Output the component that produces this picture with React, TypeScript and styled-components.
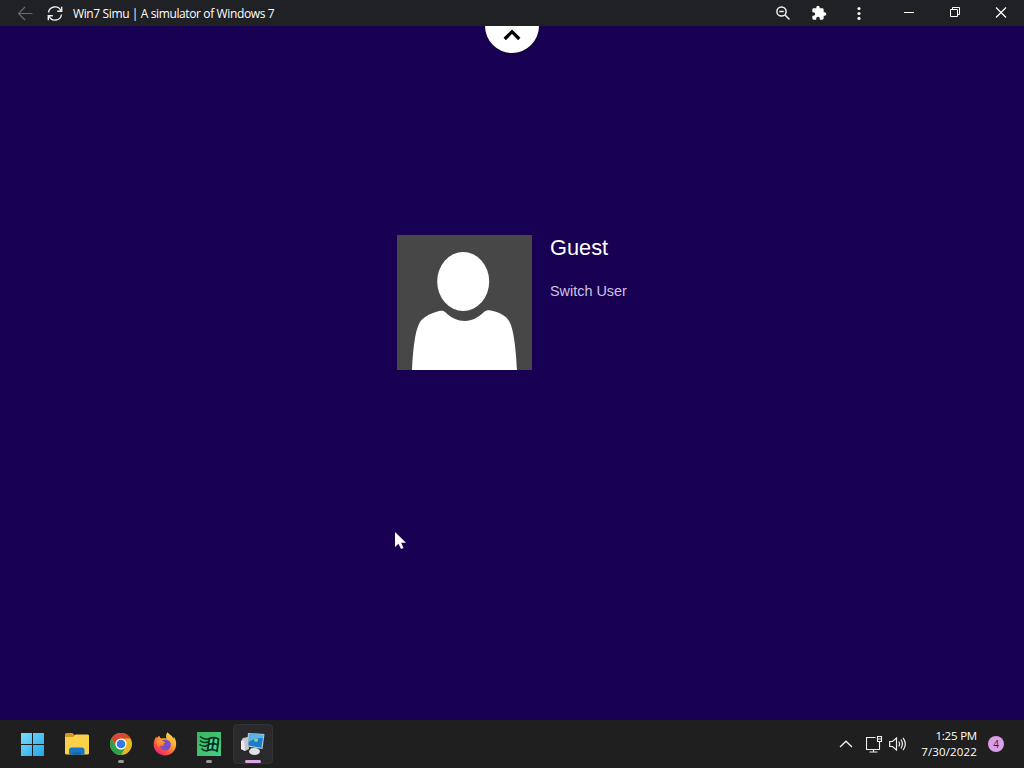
import React from "react"
import styled, { createGlobalStyle } from "styled-components"


const GlobalStyle = createGlobalStyle`
    * {
        box-sizing: border-box;
    }
    body {
        margin: 0;
        overflow: hidden;
        background: #180052;
    }
    svg {
        display: block;
        flex-shrink: 0;
    }
`
const Screen = styled.div`
    position: relative;
    display: flex;
    flex-direction: column;
    width: 1024px;
    height: 768px;
    background: #180052;
    font-family: "Open Sans", "Noto Sans", sans-serif;
    color: #fff;
    cursor: default;
`
const TitleBar = styled.header`
    display: flex;
    align-items: center;
    height: 26px;
    padding-left: 5px;
    background: #202124;
`
const BarButton = styled.div<{ $width: number }>`
    display: flex;
    align-items: center;
    justify-content: center;
    width: ${({ $width }) => $width}px;
    height: 26px;
`
const Title = styled.div`
    flex: 1;
    padding: 2px 0 0 8px;
    font-size: 12px;
    font-weight: 500;
    line-height: 26px;
    letter-spacing: -0.38px;
    white-space: nowrap;
    color: #fff;
`
const WindowButtons = styled.div`
    display: flex;
    margin-left: 5px;
`
const Desktop = styled.main`
    position: relative;
    flex: 1;
    padding: 209px 0 0 397px;
    overflow: hidden;
`
const PullTab = styled.div`
    position: absolute;
    top: -27px;
    left: 485px;
    display: flex;
    justify-content: center;
    width: 54px;
    height: 54px;
    padding-top: 30px;
    border-radius: 50%;
    background: #fff;
    box-shadow: 0 0 3px rgba(0, 0, 0, 0.6);
`
const UserCard = styled.section`
    display: flex;
    gap: 18px;
    font-family: "Liberation Sans", Arial, sans-serif;
`
const UserInfo = styled.div`
    display: flex;
    flex-direction: column;
    gap: 23px;
`
const UserName = styled.div`
    font-size: 21.8px;
    line-height: 25px;
`
const SwitchUser = styled.div`
    font-size: 14.4px;
    line-height: 16px;
    color: #cfc3e6;
`
const Cursor = styled.svg`
    position: absolute;
    left: 394px;
    top: 531px;
`
const Taskbar = styled.footer`
    display: flex;
    align-items: center;
    justify-content: space-between;
    height: 48px;
    padding: 0 20px 0 13px;
    background: #1f1f1f;
`
const Apps = styled.div`
    display: flex;
    gap: 4px;
`
const AppButton = styled.div<{ $active?: boolean }>`
    position: relative;
    display: flex;
    align-items: center;
    justify-content: center;
    width: 40px;
    height: 40px;
    border: 1px solid ${({ $active }) => ($active ? "#333336" : "transparent")};
    border-radius: 4px;
    background: ${({ $active }) => ($active ? "#2a2a2c" : "transparent")};
`
const Indicator = styled.div<{ $active?: boolean }>`
    position: absolute;
    bottom: 0;
    left: 50%;
    width: ${({ $active }) => ($active ? 16 : 6)}px;
    height: 3px;
    border-radius: 2px;
    transform: translateX(-50%);
    background: ${({ $active }) => ($active ? "#d9a5e3" : "#9b9b9b")};
`
const Tray = styled.div`
    display: flex;
    align-items: center;
`
const TrayIcons = styled.div`
    display: flex;
    align-items: center;
    margin-right: 13px;
`
const Clock = styled.div`
    width: 57px;
    margin-right: 11px;
    font-size: 11.5px;
    font-weight: 500;
    line-height: 16px;
    text-align: right;
    white-space: nowrap;
`
const Time = styled.div`
    letter-spacing: -0.2px;
`
const DateText = styled.div`
    letter-spacing: 0.15px;
`
const Badge = styled.div`
    width: 16px;
    height: 16px;
    border-radius: 50%;
    background: #dc9ee6;
    color: #38203d;
    font-size: 10px;
    line-height: 16px;
    text-align: center;
`

const Avatar = () => (
  <svg width="135" height="135" viewBox="0 0 135 135">
    <rect width="135" height="135" fill="#474747" />
    <ellipse cx="66.2" cy="46.5" rx="26" ry="29.5" fill="#fff" />
    <path
      d="M15 135C16 114 18 97 22 89C25 82 33 79 39 77C43 75.500 46 75 48 77C54 83 61 86 68 86C75 86 82 82 87 77C89 75 93 75 96 76C104 78 109 81 112 86C117 94 119 116 120 135Z"
      fill="#fff"
    />
  </svg>
)

const WindowsIcon = () => (
  <svg width="24" height="24" viewBox="0 0 24 24">
    <defs>
      <linearGradient id="win" x1="0" y1="0" x2="1" y2="1">
        <stop offset="0" stopColor="#7bdcfb" />
        <stop offset="1" stopColor="#22a6ea" />
      </linearGradient>
    </defs>
    <path d="M0 1H11V12H0zM12 1H23V12H12zM0 13H11V24H0zM12 13H23V24H12z" fill="url(#win)" />
  </svg>
)

const FolderIcon = () => (
  <svg width="26" height="24" viewBox="0 0 26 24">
    <path d="M1 2.500Q1 1 2.500 1H8.500L11 3.500V8H1z" fill="#d9971b" />
    <path d="M1 5H9L11.500 2.500H24Q25 2.500 25 4V21Q25 22.500 23.500 22.500H2.500Q1 22.500 1 21z" fill="#fbd14b" />
    <path d="M5 22.500V18Q5 15.500 7.500 15.500H18Q20.500 15.500 20.500 18V22.500z" fill="#1976c5" />
    <path d="M8.500 22.500V20.500H17V22.500z" fill="#0f63b0" />
  </svg>
)

const ChromeIcon = () => (
  <svg width="24" height="24" viewBox="0 0 24 24">
    <circle cx="12" cy="12" r="11" fill="#e8b91f" />
    <path d="M2.470 6.500A11 11 0 0 1 21.530 6.500H12A5.500 5.500 0 0 0 7.240 14.750z" fill="#db4437" />
    <path d="M2.470 6.500A11 11 0 0 0 12 23L16.760 14.750A5.500 5.500 0 0 1 7.240 14.750z" fill="#2aa14f" />
    <circle cx="12" cy="12" r="5.600" fill="#fff" />
    <circle cx="12" cy="12" r="4.300" fill="#3b78e0" />
  </svg>
)

const FirefoxIcon = () => (
  <svg width="24" height="24" viewBox="0 0 24 24">
    <defs>
      <linearGradient id="fox" x1="0.850" y1="0.050" x2="0.200" y2="0.950">
        <stop offset="0" stopColor="#ffe14a" />
        <stop offset="0.450" stopColor="#ff9a2b" />
        <stop offset="0.750" stopColor="#ff4b45" />
        <stop offset="1" stopColor="#e32878" />
      </linearGradient>
    </defs>
    <path
      d="M14.500 0.300C16 2.500 19 3.500 20.500 6.500L21 5C23 8 23.500 11 23 14C22 20 17.500 23.400 12 23.400C6 23.400 1 19 0.700 13C0.500 9.500 1.800 6.500 3.300 4.500L3.700 6.300C4.500 5 5.500 4.300 6.600 4C6.600 5.200 7 6 8.500 6.600C10 6 12 6 13.500 6.500C12.700 4.500 13 2 14.500 0.300z"
      fill="url(#fox)"
    />
    <path d="M8 10C9.500 6.500 15 6.500 17.200 10C19 14 16.500 18.500 12.500 18.500C9.500 18.500 7.500 16.500 7.200 13.800C8.500 14.300 10.500 14.200 11.500 12.800C10 12.500 9.500 11.500 8 10z" fill="#7650c7" />
    <path d="M3.500 8C5 7 8 7 9.500 9C11 9.500 12 9.700 12 10.500C12 11.500 10.500 11.200 9.800 12.300C9 13.300 7.500 13.300 6.500 13C7 16 5 15 3.500 12z" fill="#ff8d33" />
  </svg>
)

const SimulatorIcon = () => (
  <svg width="24" height="24" viewBox="0 0 24 24">
    <defs>
      <linearGradient id="sim" x1="0" y1="0" x2="1" y2="1">
        <stop offset="0" stopColor="#38b660" />
        <stop offset="1" stopColor="#48cd83" />
      </linearGradient>
    </defs>
    <rect width="24" height="24" fill="url(#sim)" />
    <g fill="none" stroke="#04301d" strokeWidth="1.800">
      <path d="M12.500 6.500Q16.500 4.500 21.500 7L20 19Q15.500 16.500 10.500 18.500z" fill="#42d99b" />
      <path d="M17 5.500L15.200 17.500M11.500 12.500Q15.500 10.500 21 13" />
      <path d="M3 4.500Q7.500 8.500 12.500 6.500M3 8.500Q7 12 12 9.500M2.500 12.500Q7 15.500 11.300 13M4.500 16.500Q7 19.500 10.500 18.500" strokeWidth="1.500" />
    </g>
  </svg>
)

const ComputerIcon = () => (
  <svg width="26" height="24" viewBox="0 0 26 24">
    <path d="M1 9L3 6L8 5L9 17L5 19L1 17z" fill="#c9c6d0" />
    <path d="M1 9L4 8.500L5 19L1 17z" fill="#eeeaf0" />
    <path d="M11 16L17 17L17.500 21L10 20z" fill="#91a4b0" />
    <ellipse cx="14.500" cy="19.500" rx="5.500" ry="3.500" fill="#dce2e6" />
    <path d="M8 1L24.500 2L22.500 17L7 14.500z" fill="#b7cad7" />
    <path d="M9.200 2.200L23.300 3L21.500 15.700L8.300 13.500z" fill="#187dcd" />
    <path d="M9.200 2.200L23.300 3L23 6Q15 6 8.800 10z" fill="#54b6ed" />
    <path d="M14.500 6.500L18 7L17.200 10L14 9.500z" fill="#8fcb70" />
    <path d="M16.200 6.700L18 7L17.600 8.500L16 8.300z" fill="#f2b34c" />
  </svg>
)

const stroke = {
  fill: "none",
  stroke: "#f1f1f1",
  strokeWidth: 1.2,
}

const App = () => {
  return (
    <Screen>
      <GlobalStyle />
      <TitleBar>
        <BarButton $width={40}>
          <svg width="16" height="16" viewBox="0 0 16 16" {...stroke} stroke="#696b6e">
            <path d="M15.500 8.500H1.500M8 2L1.500 8.500L8 15" />
          </svg>
        </BarButton>
        <BarButton $width={20}>
          <svg width="16" height="16" viewBox="0 0 16 16" {...stroke} strokeWidth={1.4}>
            <path d="M1.500 7.500A6.600 6.600 0 0 1 14 5.700M14.500 9.500A6.600 6.600 0 0 1 2 11.300" />
            <path d="M14.700 1.700V6.200H10.200M1.300 15.300V10.800H5.800" />
          </svg>
        </BarButton>
        <Title>Win7 Simu | A simulator of Windows 7</Title>
        <BarButton $width={36}>
          <svg width="16" height="16" viewBox="0 0 16 16" {...stroke} strokeWidth={1.5}>
            <circle cx="6.500" cy="6.500" r="4.600" />
            <path d="M10 10L14.500 14.500M4.300 6.500H8.700" />
          </svg>
        </BarButton>
        <BarButton $width={36}>
          <svg width="16" height="16" viewBox="0 0 24 24" fill="#fff">
            <path d="M20.500 11H19V7c0-1.100-.9-2-2-2h-4V3.500a2.500 2.500 0 0 0-5 0V5H4c-1.100 0-2 .9-2 2v3.800h1.500a2.700 2.700 0 0 1 0 5.400H2V20c0 1.100.9 2 2 2h3.800v-1.500a2.700 2.700 0 0 1 5.400 0V22H17c1.100 0 2-.9 2-2v-4h1.500a2.500 2.500 0 0 0 0-5z" />
          </svg>
        </BarButton>
        <BarButton $width={44}>
          <svg width="4" height="14" viewBox="0 0 4 14" fill="#f1f1f1">
            <circle cx="2" cy="2.500" r="1.600" />
            <circle cx="2" cy="7.500" r="1.600" />
            <circle cx="2" cy="12.400" r="1.600" />
          </svg>
        </BarButton>
        <WindowButtons>
          <BarButton $width={46}>
            <svg width="10" height="10" viewBox="0 0 10 10" fill="#fff">
              <rect y="4" width="10" height="1" />
            </svg>
          </BarButton>
          <BarButton $width={46}>
            <svg width="10" height="12" viewBox="0 0 10 12" {...stroke} stroke="#fff" strokeWidth={1}>
              <path d="M0.500 2.500H7.500V9.500H0.500zM2.500 2.500V0.500H9.500V7.500H7.500" />
            </svg>
          </BarButton>
          <BarButton $width={46}>
            <svg width="12" height="12" viewBox="0 0 12 12" {...stroke} stroke="#fff">
              <path d="M1 0.500L11 10.500M11 0.500L1 10.500" />
            </svg>
          </BarButton>
        </WindowButtons>
      </TitleBar>

      <Desktop>
        <PullTab>
          <svg width="18" height="12" viewBox="0 0 18 12" fill="none" stroke="#000" strokeWidth="3.2">
            <path d="M1.700 10L9 2.700L16.300 10" />
          </svg>
        </PullTab>
        <UserCard>
          <Avatar />
          <UserInfo>
            <UserName>Guest</UserName>
            <SwitchUser>Switch User</SwitchUser>
          </UserInfo>
        </UserCard>
      </Desktop>

      <Taskbar>
        <Apps>
          <AppButton><WindowsIcon /></AppButton>
          <AppButton><FolderIcon /></AppButton>
          <AppButton><ChromeIcon /><Indicator /></AppButton>
          <AppButton><FirefoxIcon /></AppButton>
          <AppButton><SimulatorIcon /><Indicator /></AppButton>
          <AppButton $active><ComputerIcon /><Indicator $active /></AppButton>
        </Apps>
        <Tray>
          <TrayIcons>
            <BarButton $width={28}>
              <svg width="14" height="8" viewBox="0 0 14 8" {...stroke} strokeWidth={1.3}>
                <path d="M1 7L7 1.200L13 7" />
              </svg>
            </BarButton>
            <BarButton $width={28}>
              <svg width="17" height="17" viewBox="0 0 17 17" {...stroke} strokeWidth={1.1}>
                <path d="M9.500 1.500H0.500V13.500H13.500V8M7.500 13.500V16M3.500 16H11.500" />
                <path d="M11.500 0.500H15.500V5.500H11.500zM11.500 3H15.500M13.500 5.500V9" />
              </svg>
            </BarButton>
            <BarButton $width={19}>
              <svg width="18" height="16" viewBox="0 0 18 16" {...stroke} strokeWidth={1.2}>
                <path d="M0.700 5.500H3.500L7.500 2V14L3.500 10.500H0.700z" />
                <path d="M9.700 5.500Q11.500 8 9.700 10.500M11.900 3.500Q14.900 8 11.900 12.500M14.100 1.800Q18.500 8 14.100 14.200" />
              </svg>
            </BarButton>
          </TrayIcons>
          <Clock>
            <Time>1:25 PM</Time>
            <DateText>7/30/2022</DateText>
          </Clock>
          <Badge>4</Badge>
        </Tray>
      </Taskbar>

      <Cursor width="14" height="20" viewBox="0 0 14 20">
        <path d="M1 1V16L4.500 12.700L7 18L9.500 17L7.200 11.800H12z" fill="#fff" />
      </Cursor>
    </Screen>
  )
}



export default App
